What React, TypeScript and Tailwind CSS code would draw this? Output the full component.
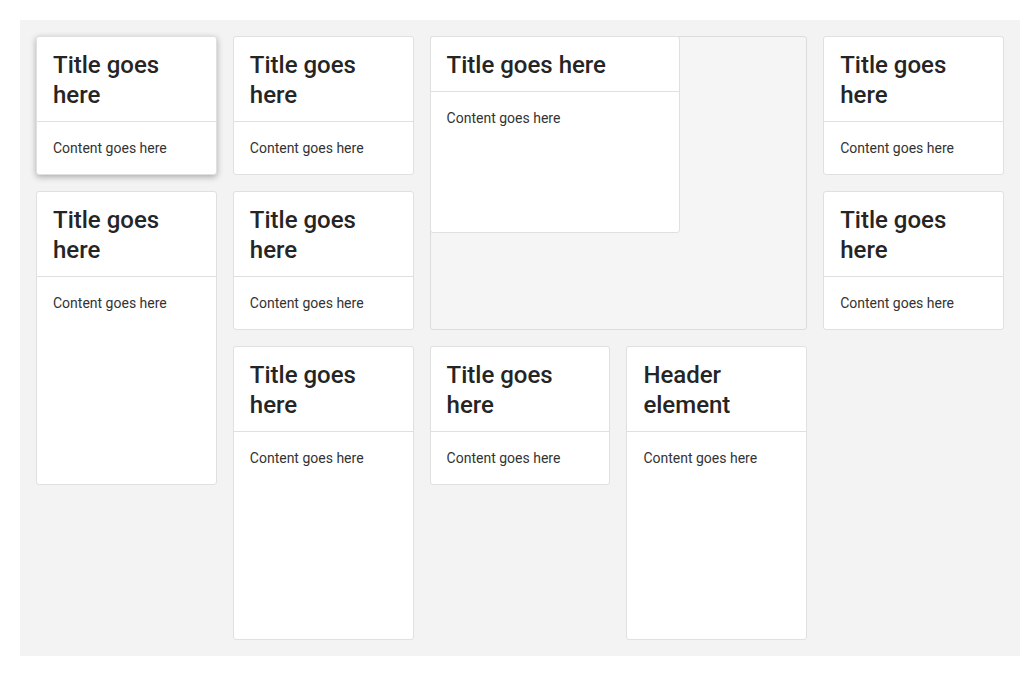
import type { FC } from 'react';

type CardProps = {
  title?: string;
  className?: string;
};

const Card: FC<CardProps> = ({ title = 'Title goes here', className = '' }) => {
  return (
    <div
      className={`flex flex-col overflow-hidden rounded-[3px] border border-[#e0e0e0] bg-white ${className}`}
    >
      <div className="border-b border-[#e0e0e0] px-4 pt-[13px] pb-[11px]">
        <h2 className="text-[24px] leading-[30px] font-medium text-[#252525]">{title}</h2>
      </div>
      <div className="px-4 pt-4 text-[14px] leading-5 text-[#333]">Content goes here</div>
    </div>
  );
};

export default function App() {
  return (
    <div className="bg-white p-5 font-['Roboto',sans-serif]">
      <div className="grid h-[636px] w-[1000px] grid-cols-5 grid-rows-4 gap-4 bg-[#f3f3f3] p-4">
        <Card className="shadow-[0_2px_6px_rgba(0,0,0,0.3)]" />
        <Card />
        <div className="col-span-2 row-span-2 flex items-start rounded-[3px] border border-[#dcdcdc] bg-[#f5f5f5]">
          <Card className="-m-px h-[197px] w-[250px]" />
        </div>
        <Card />

        <Card className="row-span-2" />
        <Card />
        <Card />

        <Card className="row-span-2" />
        <Card />
        <Card title="Header element" className="row-span-2" />
      </div>
    </div>
  );
}
